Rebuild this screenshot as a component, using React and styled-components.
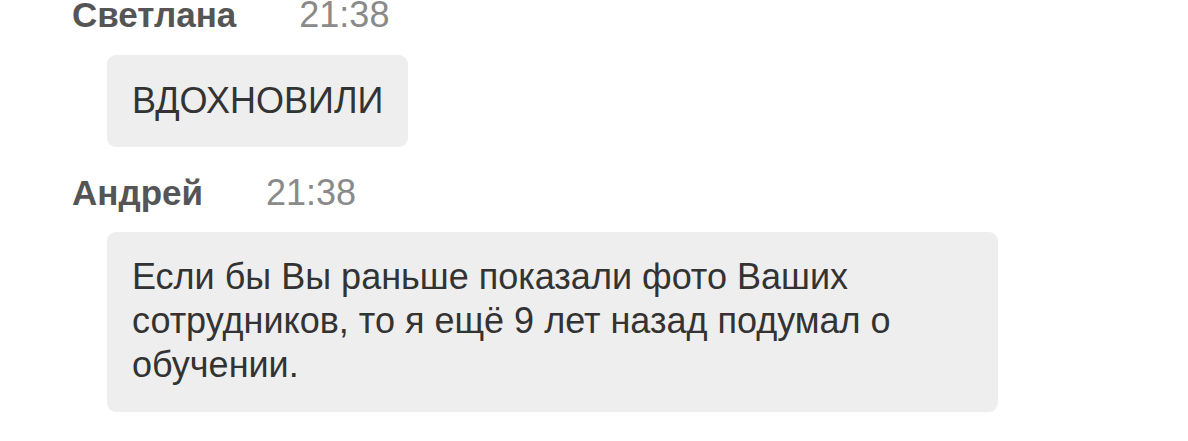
import React from "react";
import styled, { createGlobalStyle } from "styled-components";

const Global = createGlobalStyle`
  html, body { margin: 0; padding: 0; background: #ffffff; }
  body { font-family: "Liberation Sans", Arial, sans-serif; }
`;

const Feed = styled.div`
  display: flex;
  flex-direction: column;
  padding: 0 0 0 72px;
  width: 1188px;
  box-sizing: border-box;
`;

const Message = styled.div`
  display: flex;
  flex-direction: column;
  margin-top: ${(p) => p.$top}px;
`;

const Header = styled.div`
  display: flex;
  align-items: baseline;
  gap: 63px;
  height: 40px;
  line-height: 40px;
`;

const Name = styled.span`
  font-size: 35px;
  font-weight: 700;
  color: #555555;
`;

const Time = styled.span`
  font-size: 36px;
  color: #8a8a8a;
`;

const Bubble = styled.div`
  align-self: flex-start;
  margin-left: 35px;
  margin-top: ${(p) => p.$gap}px;
  background: #eeeeee;
  border-radius: 9px;
  padding: ${(p) => p.$pad};
  font-size: 36px;
  line-height: 44px;
  color: #333333;
  width: ${(p) => (p.$width ? `${p.$width}px` : "auto")};
  box-sizing: border-box;
`;

export default function App() {
  return (
    <>
      <Global />
      <Feed>
        <Message $top={-5}>
          <Header>
            <Name>Светлана</Name>
            <Time>21:38</Time>
          </Header>
          <Bubble $gap={20} $pad="23.5px 25px 24.5px 25px">ВДОХНОВИЛИ</Bubble>
        </Message>
        <Message $top={25.5}>
          <Header>
            <Name>Андрей</Name>
            <Time>21:38</Time>
          </Header>
          <Bubble $gap={19.5} $pad="22.5px 25px 25.5px 25px" $width={891}>
            Если бы Вы раньше показали фото Ваших сотрудников, то я ещё 9 лет назад подумал о обучении.
          </Bubble>
        </Message>
      </Feed>
    </>
  );
}
